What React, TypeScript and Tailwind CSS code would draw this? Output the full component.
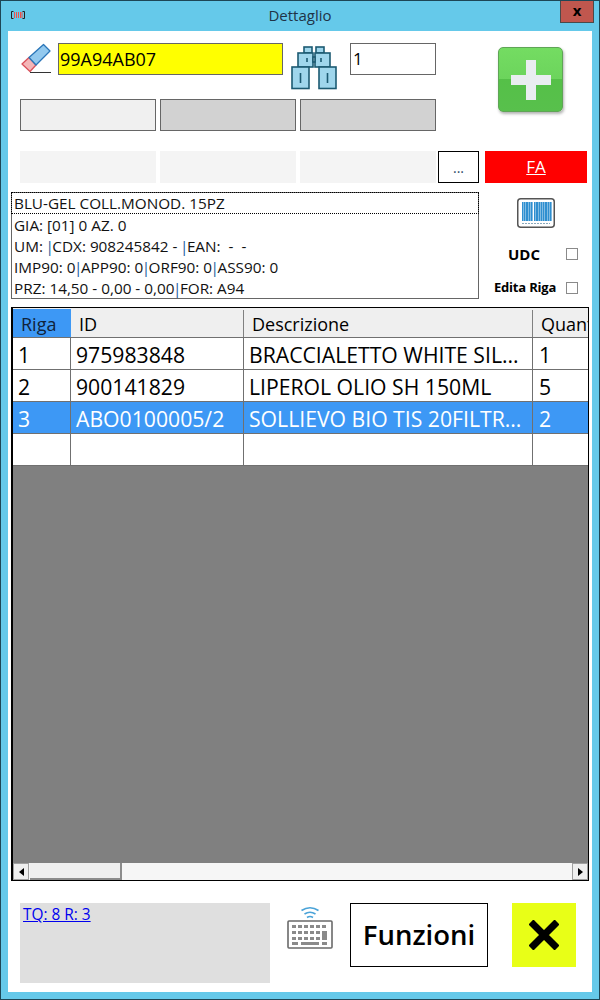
const font = { fontFamily: '"Open Sans", "Noto Sans", sans-serif' };

function Eraser() {
  return (
    <svg width="32" height="32" viewBox="0 0 32 32" className="shrink-0">
      <path d="M2 21 L9 14.5 L16 22 L10 28.5 Z" fill="#f4b6b8" stroke="#d9505a" strokeWidth="1.3" strokeLinejoin="round" />
      <path d="M9 14.5 L23.5 1.5 L30 8 L16 22 Z" fill="#93c9ee" stroke="#2a75b8" strokeWidth="1.3" strokeLinejoin="round" />
      <path d="M10 29.5 H31" stroke="#333" strokeWidth="1" />
    </svg>
  );
}

function Binoculars() {
  return (
    <svg width="46" height="44" viewBox="0 0 46 44" className="shrink-0">
      <g fill="#9fd6ec" stroke="#1c5a72" strokeWidth="1.6">
        <rect x="13" y="1" width="8" height="6" />
        <rect x="25" y="1" width="8" height="6" />
        <rect x="7" y="7" width="15" height="14" />
        <rect x="24" y="7" width="15" height="14" />
        <rect x="22" y="11" width="2" height="5" fill="#fff" />
        <rect x="1" y="21" width="17" height="21.5" />
        <rect x="28" y="21" width="17" height="21.5" />
      </g>
      <path d="M16 12v4M30 12v4M9.5 27v10M36.5 27v10" stroke="#1c5a72" strokeWidth="1.6" />
    </svg>
  );
}

function PlusIcon() {
  return (
    <div className="w-[65px] h-[65px] rounded-[5px] border border-[#5fa556] bg-[linear-gradient(#74dc62_0%,#6cd45c_50%,#55c048_50%,#58c04c_100%)] shadow-[1px_2px_3px_rgba(0,0,0,0.3)] flex items-center justify-center">
      <svg width="42" height="42" viewBox="0 0 42 42">
        <path d="M16 1h10v15h15v10H26v15H16V26H1V16h15z" fill="#e9edf0" />
      </svg>
    </div>
  );
}

function BarcodeIcon() {
  const bars = [1, 3, 5, 6, 8, 10, 13, 15, 16, 18, 20, 22, 24, 25, 27, 29];
  return (
    <svg width="38" height="30" viewBox="0 0 38 30">
      <rect x="0.75" y="0.75" width="36.5" height="28.5" rx="3" fill="#fff" stroke="#555" strokeWidth="1.5" />
      {bars.map((x) => (
        <rect key={x} x={x + 4} y="4" width="1.6" height="19" fill="#2f8fd0" />
      ))}
      <path d="M5 25.5H33" stroke="#8aa9bd" strokeWidth="1.2" strokeDasharray="2 1" />
    </svg>
  );
}

function KeyboardIcon() {
  const row = (y: number, xs: number[]) => xs.map((x) => <rect key={`${x}-${y}`} x={x} y={y} width="4" height="3" fill="#8a8a8a" />);
  return (
    <svg width="46" height="44" viewBox="0 0 46 44">
      <path d="M14.5 5.5Q23 0 31.5 5.5M17.5 9Q23 5.5 28.5 9M20 12.5Q23 10.5 26 12.5" fill="none" stroke="#4aa3d8" strokeWidth="1.6" />
      <rect x="1" y="16" width="44" height="27" rx="1" fill="#fff" stroke="#6a6a6a" strokeWidth="1.6" />
      {row(20, [5, 11, 17, 23, 29, 35])}
      {row(26, [5, 11, 17, 23, 29])}
      {row(32, [5, 11, 17, 23, 29])}
      <rect x="35" y="26" width="5" height="9" fill="#8a8a8a" />
      <rect x="5" y="37" width="6" height="3" fill="#8a8a8a" />
      <rect x="14" y="37" width="18" height="3" fill="#8a8a8a" />
      <rect x="35" y="37" width="5" height="3" fill="#8a8a8a" />
    </svg>
  );
}

function Checkbox() {
  return <div className="w-[12px] h-[12px] border border-[#8a8a8a] bg-white shrink-0" />;
}

function Pipe() {
  return <span className="text-[#1a5f9e] -mx-[1.5px]">|</span>;
}

const columns = "grid grid-cols-[58px_173px_289px_1fr]";
const rows = [
  ["1", "975983848", "BRACCIALETTO WHITE SIL...", "1"],
  ["2", "900141829", "LIPEROL OLIO SH 150ML", "5"],
  ["3", "ABO0100005/2", "SOLLIEVO BIO TIS 20FILTR...", "2"],
  ["", "", "", ""],
];

export default function App() {
  return (
    <div style={font} className="w-[600px] h-[1000px] bg-[#65c9ea] border border-[#1d4656] flex flex-col text-black overflow-hidden">
      <div className="h-[30px] shrink-0 relative flex items-center justify-center">
        <svg width="14" height="8" viewBox="0 0 14 8" className="absolute left-[10px] top-[10px]">
          <path d="M2.5.5H.5v7h2M11.5.5h2v7h-2" fill="none" stroke="#222" />
          <path d="M3.5 1v6M5.5 1v6M7.5 1v6M9.5 1v6M11 1v6" stroke="#f0504a" />
        </svg>
        <span className="text-[15px] text-[#1f3346] -mt-[2px]">Dettaglio</span>
        <div className="absolute right-[5px] -top-[1px] w-[34px] h-[23px] bg-[#c0574e] border border-[#4a4a4a] flex items-center justify-center">
          <span className="text-[15px] font-bold leading-none -mt-[3px]">x</span>
        </div>
      </div>

      <div className="mx-[7px] h-[961px] shrink-0 bg-white flex flex-col">
        <div className="flex pt-[12px] pl-[12px] shrink-0">
          <div className="w-[416px]">
            <div className="flex items-start h-[32px]">
              <Eraser />
              <div className="ml-[6px] w-[225px] h-[32px] shrink-0 bg-[#ffff00] border border-[#666] flex items-center px-[1px] text-[18px]">99A94AB07</div>
              <div className="ml-[8px] mt-[3px]"><Binoculars /></div>
              <div className="ml-[13px] w-[86px] h-[32px] shrink-0 border border-[#666] flex items-center px-[2px] text-[17px]">1</div>
            </div>
            <div className="mt-[24px] grid grid-cols-3 gap-[4px]">
              <div className="h-[32px] bg-[#f0f0f0] border border-[#666]" />
              <div className="h-[32px] bg-[#d2d2d2] border border-[#666]" />
              <div className="h-[32px] bg-[#d2d2d2] border border-[#666]" />
            </div>
          </div>
          <div className="ml-[62px] mt-[4px]"><PlusIcon /></div>
        </div>

        <div className="mt-[20px] pl-[12px] flex h-[32px] shrink-0">
          <div className="w-[136px] bg-[#f4f4f4]" />
          <div className="ml-[4px] w-[136px] bg-[#f4f4f4]" />
          <div className="ml-[4px] w-[136px] bg-[#f4f4f4]" />
          <div className="ml-[2px] w-[41px] border border-black flex items-center justify-center text-[14px] text-[#2b4a66]">...</div>
          <div className="ml-[6px] w-[102px] bg-[#ff0000] text-white text-[17px] underline flex items-center justify-center">FA</div>
        </div>

        <div className="mt-[9px] pl-[3px] flex shrink-0">
          <div className="w-[468px] h-[107px] border border-[#666] text-[15.3px] leading-[21px] text-[#111]">
            <div className="h-[22px] border border-dotted border-black px-[2px] pt-[1px] whitespace-nowrap -m-[1px] mb-0 leading-[19px]">BLU-GEL COLL.MONOD. 15PZ</div>
            <div className="px-[2px] pt-[1px] whitespace-nowrap">GIA: [01] 0 AZ. 0</div>
            <div className="px-[2px] whitespace-pre">UM: <Pipe />CDX: 908245842 - <Pipe />EAN:  -  -</div>
            <div className="px-[2px] whitespace-nowrap">IMP90: 0<Pipe />APP90: 0<Pipe />ORF90: 0<Pipe />ASS90: 0</div>
            <div className="px-[2px] whitespace-nowrap">PRZ: 14,50 - 0,00 - 0,00<Pipe />FOR: A94</div>
          </div>
          <div className="flex-1 flex flex-col items-start pl-[14px]">
            <div className="ml-[24px] mt-[6px]"><BarcodeIcon /></div>
            <div className="mt-[20px] flex items-center h-[12px]">
              <span className="ml-[15px] w-[58px] text-[15px] font-bold">UDC</span>
              <Checkbox />
            </div>
            <div className="mt-[22px] flex items-center h-[12px]">
              <span className="ml-[1px] w-[72px] text-[13px] font-bold whitespace-nowrap tracking-[-0.2px]">Edita Riga</span>
              <Checkbox />
            </div>
          </div>
        </div>

        <div className="mt-[8px] ml-[3px] w-[578px] h-[574px] shrink-0 border border-black border-l-2 bg-[#808080] flex flex-col overflow-hidden">
          <div className={`${columns} h-[29px] bg-[#efefef] text-[18px] pt-[1px] shrink-0`}>
            <div className="bg-[#3d98f5] px-[8px] pt-[2px] flex items-center text-[#10233a]">Riga</div>
            <div className="border-r border-[#808080] mt-[1px] px-[8px] pt-[1px] flex items-center">ID</div>
            <div className="border-r border-[#808080] mt-[1px] px-[8px] pt-[1px] flex items-center">Descrizione</div>
            <div className="px-[8px] pt-[1px] flex items-center whitespace-nowrap overflow-hidden">Quantita</div>
          </div>
          {rows.map((r, i) => (
            <div key={i} className={`${columns} ${i === 3 ? "h-[33px] border-b" : "h-[32px]"} shrink-0 text-[21.2px] border-t border-[#707070] ${i === 2 ? "bg-[#3d98f5] text-white" : "bg-white"}`}>
              <div className="border-r border-[#707070] px-[5px] pt-[1px] flex items-center">{r[0]}</div>
              <div className="border-r border-[#707070] px-[5px] pt-[1px] flex items-center whitespace-nowrap">{r[1]}</div>
              <div className="border-r border-[#707070] px-[5px] pt-[1px] flex items-center whitespace-nowrap overflow-hidden">{r[2]}</div>
              <div className="px-[6px] pt-[1px] flex items-center">{r[3]}</div>
            </div>
          ))}
          <div className="flex-1" />
          <div className="h-[17px] shrink-0 bg-[#f6f6f6] flex items-stretch">
            <div className="w-[16px] bg-[#efefef] border border-[#a0a0a0] flex items-center justify-center">
              <svg width="5" height="8" viewBox="0 0 5 8"><path d="M5 0v8L0 4z" fill="#000" /></svg>
            </div>
            <div className="ml-[1px] w-[92px] bg-[#efefef] border-r-2 border-b-2 border-[#8c8c8c]" />
            <div className="flex-1" />
            <div className="w-[16px] bg-[#efefef] border border-[#a0a0a0] flex items-center justify-center">
              <svg width="5" height="8" viewBox="0 0 5 8"><path d="M0 0v8l5-4z" fill="#000" /></svg>
            </div>
          </div>
        </div>

        <div className="mt-[22px] pl-[12px] flex items-start shrink-0">
          <div className="w-[250px] h-[80px] bg-[#dfdfdf] px-[3px] text-[15.4px] text-[#0000ee] underline">TQ: 8 R: 3</div>
          <div className="ml-[17px] mt-[2px]"><KeyboardIcon /></div>
          <div className="ml-[17px] w-[138px] h-[64px] border border-black flex items-center justify-center text-[27.5px] font-semibold">Funzioni</div>
          <div className="ml-[24px] w-[64px] h-[64px] bg-[#e8ff17] flex items-center justify-center">
            <svg width="30" height="30" viewBox="0 0 30 30">
              <path d="M3 3 L27 27 M27 3 L3 27" stroke="#000" strokeWidth="8" strokeLinecap="square" transform="translate(15 15) scale(.88) translate(-15 -15)" />
            </svg>
          </div>
        </div>
      </div>
    </div>
  );
}
